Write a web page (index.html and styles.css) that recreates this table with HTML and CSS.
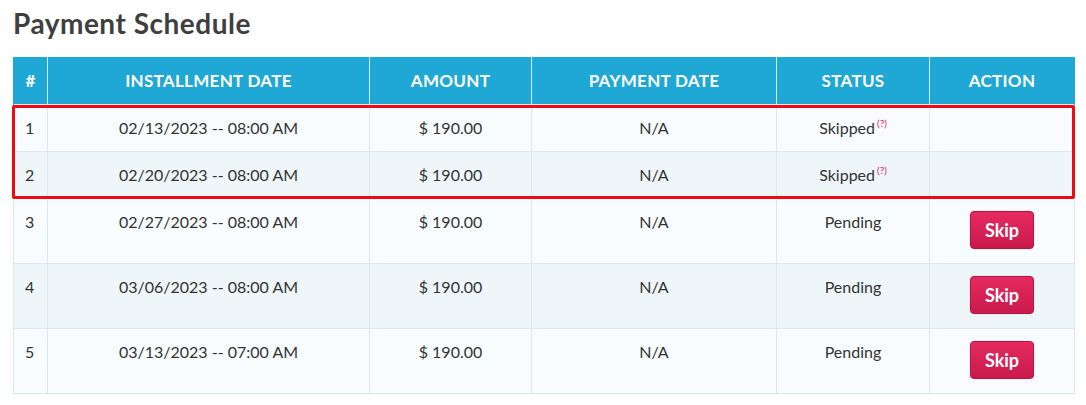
FILE: index.html
```html
<!DOCTYPE html>
<html>
<head>
<meta charset="utf-8">
<link rel="stylesheet" href="styles.css">
</head>
<body>
<div class="page">
  <h2 class="title">Payment Schedule</h2>
  <div class="table-wrap">
    <table class="schedule">
      <colgroup>
        <col class="c-num"><col class="c-inst"><col class="c-amt"><col class="c-pay"><col class="c-status"><col class="c-action">
      </colgroup>
      <thead>
        <tr><th>#</th><th>INSTALLMENT DATE</th><th>AMOUNT</th><th>PAYMENT DATE</th><th>STATUS</th><th>ACTION</th></tr>
      </thead>
      <tbody>
        <tr class="short"><td class="num">1</td><td>02/13/2023 -- 08:00 AM</td><td>$ 190.00</td><td>N/A</td><td>Skipped<sup class="help">(?)</sup></td><td></td></tr>
        <tr class="short"><td class="num">2</td><td>02/20/2023 -- 08:00 AM</td><td>$ 190.00</td><td>N/A</td><td>Skipped<sup class="help">(?)</sup></td><td></td></tr>
        <tr><td class="num">3</td><td>02/27/2023 -- 08:00 AM</td><td>$ 190.00</td><td>N/A</td><td>Pending</td><td><button class="skip">Skip</button></td></tr>
        <tr><td class="num">4</td><td>03/06/2023 -- 08:00 AM</td><td>$ 190.00</td><td>N/A</td><td>Pending</td><td><button class="skip">Skip</button></td></tr>
        <tr><td class="num">5</td><td>03/13/2023 -- 07:00 AM</td><td>$ 190.00</td><td>N/A</td><td>Pending</td><td><button class="skip">Skip</button></td></tr>
      </tbody>
    </table>
    <div class="highlight"></div>
  </div>
</div>
</body>
</html>
```

FILE: styles.css
```css
html, body {
  margin: 0;
  padding: 0;
  background: #ffffff;
}

.page {
  padding: 6px 12px 0 13px;
  font-family: Lato, "Open Sans", sans-serif;
  color: #333333;
}

.title {
  margin: 0 0 17px 0;
  font-size: 28px;
  line-height: 34px;
  font-weight: 700;
  letter-spacing: 0.5px;
  color: #3f3f3f;
}

.table-wrap {
  position: relative;
  width: 1061px;
}

.schedule {
  width: 1061px;
  border-collapse: collapse;
  table-layout: fixed;
  font-size: 16px;
}

.c-num { width: 34px; }
.c-inst { width: 322px; }
.c-amt { width: 162px; }
.c-pay { width: 245px; }
.c-status { width: 153px; }
.c-action { width: 145px; }

.schedule th {
  background: #1fa8d6;
  color: #ffffff;
  font-weight: 700;
  font-size: 17px;
  letter-spacing: 0.3px;
  height: 47px;
  padding: 0 4px;
  text-align: center;
  border-left: 1px solid #d8eef7;
  border-right: 1px solid #d8eef7;
}

.schedule th:first-child { border-left: 1px solid #1fa8d6; }
.schedule th:last-child { border-right: 1px solid #1fa8d6; }

.schedule td {
  padding: 12px 8px 14px;
  line-height: 21px;
  text-align: center;
  vertical-align: top;
  border: 1px solid #d9e9ef;
  color: #333333;
}

.schedule td.num {
  text-align: left;
  padding-left: 11px;
}

.schedule tbody tr:nth-child(odd) { background: #f9fcfe; }
.schedule tbody tr:nth-child(even) { background: #eef6f9; }

.schedule tbody tr.short td {
  padding: 12px 8px 13px;
}

.schedule tbody tr.short td.num { padding-left: 11px; }

.help {
  font-size: 10px;
  color: #e0245a;
  margin-left: 2px;
  vertical-align: top;
  position: relative;
  top: -4px;
}

.skip {
  width: 64px;
  height: 38px;
  margin: 0;
  border: 1px solid #b5153f;
  border-radius: 4px;
  background: linear-gradient(#e62a60, #c91a4b);
  color: #ffffff;
  font-family: Lato, "Open Sans", sans-serif;
  font-size: 18px;
  font-weight: 700;
  box-shadow: 0 0 2px rgba(0,0,0,0.15);
  cursor: pointer;
}

.highlight {
  position: absolute;
  left: -1px;
  right: -1px;
  top: 48px;
  height: 94px;
  border: 3px solid #ee0a12;
  border-radius: 2px;
  box-sizing: border-box;
  pointer-events: none;
}
```
